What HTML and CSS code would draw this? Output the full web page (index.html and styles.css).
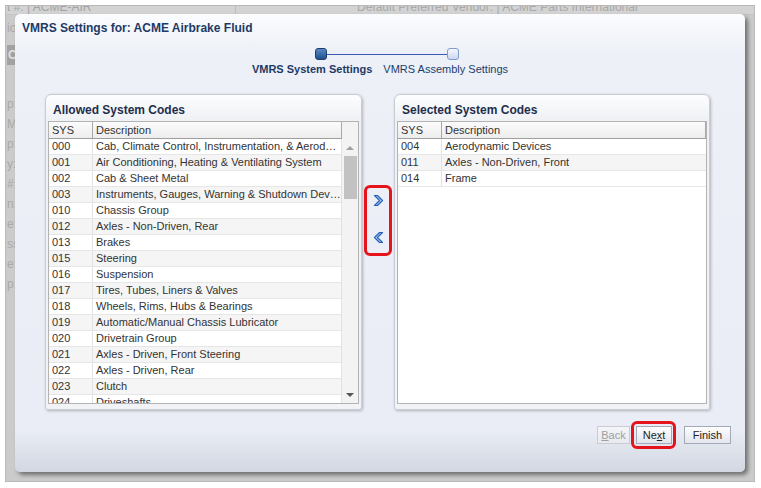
FILE: index.html
```html
<!DOCTYPE html>
<html lang="en">
<head>
    <meta charset="UTF-8">
    <meta name="viewport" content="width=device-width, initial-scale=1.0">
    <title>VMRS Settings</title>
    <link rel="stylesheet" href="styles.css">
</head>
<body>

    <div class="screen">
        <!-- dimmed page behind the popup -->
        <div class="backdrop">
            <div class="topbar">
                <span class="top-cell first">t #: | ACME-AIR</span>
                <span class="top-cell second">Default Preferred Vendor: | ACME Parts International</span>
            </div>
            <div class="side">
                <div class="side-io">io</div>
                <div class="side-btn">C</div>
                <div class="side-labels">
                    <span>p:</span><span>M:</span><span>p:</span><span>y:</span><span>#:</span>
                    <span>n:</span><span>e:</span><span>ss:</span><span>e:</span><span>p:</span>
                </div>
            </div>
        </div>

        <div class="dialog">
            <div class="dlg-title">VMRS Settings for: ACME Airbrake Fluid</div>

            <div class="train">
                <div class="track">
                    <span class="stop current"></span>
                    <span class="link"></span>
                    <span class="stop"></span>
                </div>
                <div class="stops">
                    <span class="stop-label current">VMRS System Settings</span>
                    <span class="stop-label">VMRS Assembly Settings</span>
                </div>
            </div>

            <div class="lists">
                <div class="panel left">
                    <div class="panel-head">Allowed System Codes</div>
                    <div class="grid">
                        <div class="cols">
                            <div class="row head"><span class="c-sys">SYS</span><span class="c-desc">Description</span></div>
                            <div class="row"><span class="c-sys">000</span><span class="c-desc">Cab, Climate Control, Instrumentation, &amp; Aerodynamic Devices</span></div>
                            <div class="row"><span class="c-sys">001</span><span class="c-desc">Air Conditioning, Heating &amp; Ventilating System</span></div>
                            <div class="row"><span class="c-sys">002</span><span class="c-desc">Cab &amp; Sheet Metal</span></div>
                            <div class="row"><span class="c-sys">003</span><span class="c-desc">Instruments, Gauges, Warning &amp; Shutdown Devices</span></div>
                            <div class="row"><span class="c-sys">010</span><span class="c-desc">Chassis Group</span></div>
                            <div class="row"><span class="c-sys">012</span><span class="c-desc">Axles - Non-Driven, Rear</span></div>
                            <div class="row"><span class="c-sys">013</span><span class="c-desc">Brakes</span></div>
                            <div class="row"><span class="c-sys">015</span><span class="c-desc">Steering</span></div>
                            <div class="row"><span class="c-sys">016</span><span class="c-desc">Suspension</span></div>
                            <div class="row"><span class="c-sys">017</span><span class="c-desc">Tires, Tubes, Liners &amp; Valves</span></div>
                            <div class="row"><span class="c-sys">018</span><span class="c-desc">Wheels, Rims, Hubs &amp; Bearings</span></div>
                            <div class="row"><span class="c-sys">019</span><span class="c-desc">Automatic/Manual Chassis Lubricator</span></div>
                            <div class="row"><span class="c-sys">020</span><span class="c-desc">Drivetrain Group</span></div>
                            <div class="row"><span class="c-sys">021</span><span class="c-desc">Axles - Driven, Front Steering</span></div>
                            <div class="row"><span class="c-sys">022</span><span class="c-desc">Axles - Driven, Rear</span></div>
                            <div class="row"><span class="c-sys">023</span><span class="c-desc">Clutch</span></div>
                            <div class="row"><span class="c-sys">024</span><span class="c-desc">Driveshafts</span></div>
                        </div>
                        <div class="vscroll">
                            <div class="vs-head"></div>
                            <div class="vs-up"></div>
                            <div class="vs-thumb"></div>
                            <div class="vs-track"></div>
                            <div class="vs-down"></div>
                        </div>
                    </div>
                </div>

                <div class="mover">
                    <div class="hl hl-move">
                        <svg class="arrow" width="11" height="13" viewBox="0 0 11 13">
                            <path d="M1.5 1.5 L4.5 1.5 L9.5 6.5 L4.5 11.5 L1.5 11.5 L6.5 6.5 Z" fill="#a9cbf3" stroke="#2462b8" stroke-width="1.2" stroke-linejoin="round"/>
                        </svg>
                        <svg class="arrow" width="11" height="13" viewBox="0 0 11 13">
                            <path d="M9.5 1.5 L6.5 1.5 L1.5 6.5 L6.5 11.5 L9.5 11.5 L4.5 6.5 Z" fill="#a9cbf3" stroke="#2462b8" stroke-width="1.2" stroke-linejoin="round"/>
                        </svg>
                    </div>
                </div>

                <div class="panel right">
                    <div class="panel-head">Selected System Codes</div>
                    <div class="grid">
                        <div class="cols">
                            <div class="row head"><span class="c-sys">SYS</span><span class="c-desc">Description</span></div>
                            <div class="row"><span class="c-sys">004</span><span class="c-desc">Aerodynamic Devices</span></div>
                            <div class="row"><span class="c-sys">011</span><span class="c-desc">Axles - Non-Driven, Front</span></div>
                            <div class="row"><span class="c-sys">014</span><span class="c-desc">Frame</span></div>
                        </div>
                    </div>
                </div>
            </div>

            <div class="footer">
                <button class="btn back disabled"><u>B</u>ack</button>
                <div class="hl hl-next">
                    <button class="btn">Ne<u>x</u>t</button>
                </div>
                <button class="btn finish">Finish</button>
            </div>
        </div>
    </div>

</body>
</html>
```

FILE: styles.css
```css
* {
    margin: 0;
    padding: 0;
    box-sizing: border-box;
}

body {
    background-color: #ffffff;
    font-family: "Liberation Sans", Arial, sans-serif;
    font-size: 11px;
    color: #333333;
}

.screen {
    position: relative;
    margin: 5px 6px 0 5px;
    width: 750px;
    height: 477px;
    border: 1px solid #b9b9b9;
    background-color: #cbcbcb;
    overflow: hidden;
}

/* dimmed page */
.backdrop {
    color: #a9a9a9;
}

.topbar {
    display: flex;
    height: 9px;
    background-color: #d3d3d3;
    overflow: hidden;
    border-bottom: 1px solid #c4c4c4;
}

.top-cell {
    display: block;
    margin-top: -6px;
    line-height: 14px;
    font-size: 12px;
    white-space: nowrap;
}

.top-cell.first {
    width: 230px;
    padding-left: 1px;
    border-right: 1px solid #bdbdbd;
    color: #a3a3a3;
}

.top-cell.second {
    padding-left: 121px;
    color: #a8a8a8;
}

.side {
    display: flex;
    flex-direction: column;
    padding-left: 1px;
    font-size: 12px;
}

.side-io {
    margin-top: 6px;
    height: 16px;
}

.side-btn {
    margin-top: 8px;
    width: 10px;
    height: 20px;
    padding-left: 1px;
    background-color: #a2a2a2;
    color: #e0e0e0;
    font-weight: bold;
    line-height: 20px;
}

.side-labels {
    display: flex;
    flex-direction: column;
    padding-top: 32px;
    gap: 6px;
    line-height: 14px;
}

/* the popup */
.dialog {
    position: absolute;
    left: 9px;
    top: 8px;
    width: 730px;
    height: 458px;
    display: flex;
    flex-direction: column;
    border-radius: 5px;
    background: linear-gradient(#fbfcfe 0, #edf0f7 40px, #eaedf5 415px, #d2d7e2 100%);
    box-shadow: 3px 3px 4px rgba(0, 0, 0, 0.45);
}

.dlg-title {
    height: 25px;
    padding: 8px 0 0 7px;
    font-size: 12px;
    font-weight: bold;
    color: #1d3a66;
    line-height: 13px;
}

.train {
    display: flex;
    flex-direction: column;
    align-items: center;
    padding-top: 9px;
}

.track {
    display: flex;
    align-items: center;
    margin-left: 14px;
}

.stop {
    width: 12px;
    height: 12px;
    border: 1px solid #7e9ccf;
    border-radius: 3px;
    background: linear-gradient(#f4f7fd, #ccd8ef);
}

.stop.current {
    border-color: #1d3e6d;
    background: linear-gradient(#5a88c4, #1f4f8e);
}

.link {
    width: 120px;
    height: 1px;
    background-color: #3a5bb4;
}

.stops {
    display: flex;
    gap: 11px;
    padding-top: 2px;
    line-height: 14px;
}

.stop-label {
    color: #203d6b;
}

.stop-label.current {
    font-weight: bold;
    color: #1d3a66;
}

.lists {
    display: flex;
    padding: 18px 0 0 30px;
}

.panel {
    height: 316px;
    display: flex;
    flex-direction: column;
    padding: 0 2px;
    border: 1px solid #c8ccd5;
    border-radius: 6px 6px 3px 3px;
    background: linear-gradient(#fdfdfe, #eff1f5 24px, #f2f3f6);
    box-shadow: 1px 1px 3px rgba(0, 0, 0, 0.25);
}

.panel.left {
    width: 317px;
}

.panel.right {
    width: 316px;
}

.panel-head {
    height: 26px;
    padding: 8px 0 0 5px;
    font-size: 12px;
    font-weight: bold;
    color: #1f2e4c;
}

.grid {
    display: flex;
    height: 283px;
    border: 1px solid #b3b3b3;
    background-color: #ffffff;
    overflow: hidden;
}

.cols {
    flex: 1;
    min-width: 0;
}

.row {
    display: flex;
    height: 16px;
    line-height: 15px;
    border-bottom: 1px solid #e6e6e6;
}

.row:nth-child(odd) {
    background-color: #f5f5f5;
}

.row.head {
    height: 17px;
    line-height: 16px;
    background: linear-gradient(#fbfbfb, #ededed);
    border-bottom: 1px solid #9f9f9f;
}

.right .row.head {
    border-right: 1px solid #a8a8a8;
}

.c-sys {
    width: 44px;
    flex: none;
    padding-left: 3px;
    border-right: 1px solid #e2e2e2;
}

.head .c-sys {
    border-right-color: #a8a8a8;
}

.c-desc {
    flex: 1;
    min-width: 0;
    padding-left: 3px;
    white-space: nowrap;
    overflow: hidden;
    text-overflow: ellipsis;
}

.left .row {
    border-right: 1px solid #a8a8a8;
}

.left .row:not(.head) {
    border-right-color: #e2e2e2;
}

.vscroll {
    width: 16px;
    flex: none;
    display: flex;
    flex-direction: column;
    align-items: center;
    background-color: #f3f3f3;
}

.vs-head {
    height: 17px;
    width: 100%;
}

.vs-up {
    margin-top: 7px;
    width: 0;
    height: 0;
    border-left: 4px solid transparent;
    border-right: 4px solid transparent;
    border-bottom: 4px solid #a0a0a0;
}

.vs-thumb {
    margin-top: 6px;
    width: 13px;
    height: 43px;
    background-color: #c2c2c2;
}

.vs-track {
    flex: 1;
}

.vs-down {
    margin-bottom: 6px;
    width: 0;
    height: 0;
    border-left: 4px solid transparent;
    border-right: 4px solid transparent;
    border-top: 4px solid #555555;
}

.mover {
    width: 32px;
    padding: 91px 0 0 2px;
}

/* red annotation frames */
.hl {
    border: 3px solid #e5141b;
    border-radius: 6px;
}

.hl-move {
    width: 28px;
    height: 71px;
    display: flex;
    flex-direction: column;
    align-items: center;
    padding-top: 6px;
    gap: 24px;
}

.footer {
    display: flex;
    justify-content: flex-end;
    align-items: center;
    padding: 11px 14px 0 0;
}

.btn {
    height: 18px;
    padding: 0 6px;
    border: 1px solid #a3a9b7;
    background: linear-gradient(#fefefe, #e3e6ed);
    font-family: "Liberation Sans", Arial, sans-serif;
    font-size: 11px;
    color: #1e1e1e;
    line-height: 16px;
}

.btn.back {
    width: 33px;
    padding: 0;
}

.btn.disabled {
    color: #a0a0a0;
    border-color: #c9ccd4;
    background: linear-gradient(#f4f5f8, #e8eaef);
}

.hl-next {
    margin-left: 1px;
    padding: 2px 2px 2px 2px;
    width: 45px;
    height: 28px;
}

.hl-next .btn {
    width: 36px;
    padding: 0;
}

.btn.finish {
    margin-left: 8px;
    width: 47px;
    padding: 0;
}
```
